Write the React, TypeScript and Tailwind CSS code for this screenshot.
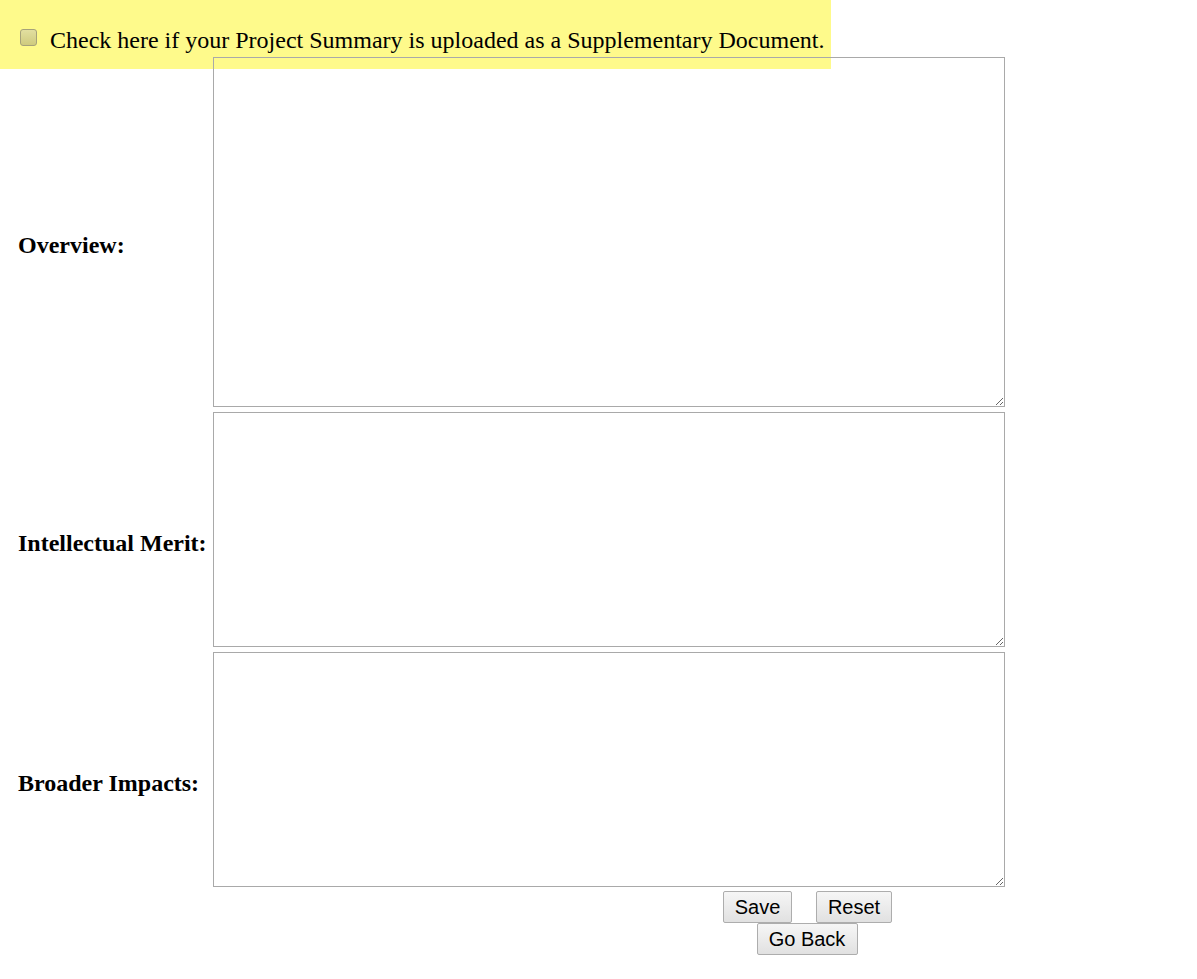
import React from 'react'

const rows = [
    { label: 'Overview:', h: 'h-[350px]' },
    { label: 'Intellectual Merit:', h: 'h-[235px]' },
    { label: 'Broader Impacts:', h: 'h-[235px]' },
]

const btn = "border border-[#adadad] rounded-[2px] bg-gradient-to-b from-[#f6f6f6] to-[#e1e1e1] h-[32px] text-[20px] text-black font-['Liberation_Sans',Arial,sans-serif] leading-none"

const App = () => {
    return (
        <div className="min-h-screen bg-white text-black font-['Liberation_Serif','Times_New_Roman',serif]">
            <div className="w-[831px] h-[69px] bg-[#fefa8b] flex items-start pt-[29px] pl-[20px]">
                <input type="checkbox" className="appearance-none w-[17px] h-[17px] rounded-[3px] border border-[#a6a27a] bg-gradient-to-b from-[#e2dfa0] to-[#cfcb7e] shrink-0" />
                <span className="ml-[13px] text-[24px] leading-[20px] mt-[1px]">Check here if your Project Summary is uploaded as a Supplementary Document.</span>
            </div>

            <div className="-mt-[12px] flex flex-col gap-[5px]">
                {rows.map((r) => (
                    <div key={r.label} className="flex items-center">
                        <div className="w-[213px] pl-[18px] pt-[26px] text-[24px] font-bold">{r.label}</div>
                        <textarea className={`w-[792px] ${r.h} border border-[#a9a9a9] bg-transparent resize-y block`} />
                    </div>
                ))}
            </div>

            <div className="ml-[609px] w-[396px] flex flex-col items-center pt-[4px]">
                <div className="flex gap-[24px] ml-[1px]">
                    <button className={`${btn} w-[69px]`}>Save</button>
                    <button className={`${btn} w-[76px]`}>Reset</button>
                </div>
                <button className={`${btn} w-[101px]`}>Go Back</button>
            </div>
        </div>
    )
}

export default App
